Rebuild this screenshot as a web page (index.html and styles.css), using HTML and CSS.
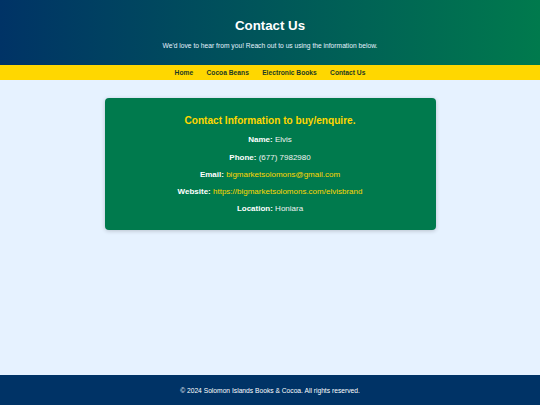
FILE: index.html
```html
<!DOCTYPE html>
<html lang="en">
<head>
<meta charset="utf-8">
<title>Contact Us</title>
<link rel="stylesheet" href="styles.css">
</head>
<body>
<header class="hero">
  <h1 class="hero-title">Contact Us</h1>
  <p class="hero-sub">We'd love to hear from you! Reach out to us using the information below.</p>
</header>
<nav class="nav">
  <a href="#">Home</a>
  <a href="#">Cocoa Beans</a>
  <a href="#">Electronic Books</a>
  <a href="#">Contact Us</a>
</nav>
<main class="main">
  <section class="card">
    <h2 class="card-title">Contact Information to buy/enquire.</h2>
    <p><strong>Name:</strong> Elvis</p>
    <p><strong>Phone:</strong> (677) 7982980</p>
    <p><strong>Email:</strong> <a href="#">bigmarketsolomons@gmail.com</a></p>
    <p><strong>Website:</strong> <a href="#">https://bigmarketsolomons.com/elvisbrand</a></p>
    <p><strong>Location:</strong> Honiara</p>
  </section>
</main>
<footer class="footer">
  <p>&copy; 2024 Solomon Islands Books &amp; Cocoa. All rights reserved.</p>
</footer>
</body>
</html>
```
FILE: styles.css
```css
* { box-sizing: border-box; }
html, body { margin: 0; padding: 0; }
body {
  font-family: "Liberation Sans", Arial, sans-serif;
  background: #e6f2ff;
  height: 405px;
  display: flex;
  flex-direction: column;
}
.hero {
  background: linear-gradient(to right, #003366, #007a4d);
  color: #ffffff;
  text-align: center;
  padding: 18px 0 15px;
  height: 65px;
}
.hero-title {
  margin: 0;
  font-size: 13.3px;
  line-height: 16px;
  font-weight: bold;
}
.hero-sub {
  margin: 8px 0 0;
  font-size: 6.7px;
  line-height: 8px;
  color: #e6f2ff;
}
.nav {
  background: #ffd700;
  height: 15px;
  display: flex;
  justify-content: center;
  align-items: center;
  gap: 13.3px;
}
.nav a {
  color: #1c3a24;
  text-decoration: none;
  font-weight: bold;
  font-size: 6.7px;
}
.main {
  flex: 1;
  display: flex;
  justify-content: center;
  align-items: flex-start;
  padding-top: 18px;
}
.card {
  width: 331px;
  background: #007a4d;
  color: #f2f2f2;
  border-radius: 4px;
  box-shadow: 0 1px 4px rgba(0, 0, 0, 0.2);
  text-align: center;
  padding: 17px 10px 12.4px;
}
.card-title {
  margin: 0 0 4.3px;
  color: #ffd700;
  font-size: 10.1px;
  line-height: 12px;
  font-weight: bold;
}
.card p {
  margin: 0;
  font-size: 8px;
  line-height: 17.3px;
}
.card strong { color: #ffffff; }
.card a {
  color: #ffd700;
  text-decoration: none;
}
.footer {
  background: #003366;
  color: #ffffff;
  height: 30px;
  display: flex;
  justify-content: center;
  align-items: center;
}
.footer p {
  margin: 0;
  font-size: 6.7px;
}
```
